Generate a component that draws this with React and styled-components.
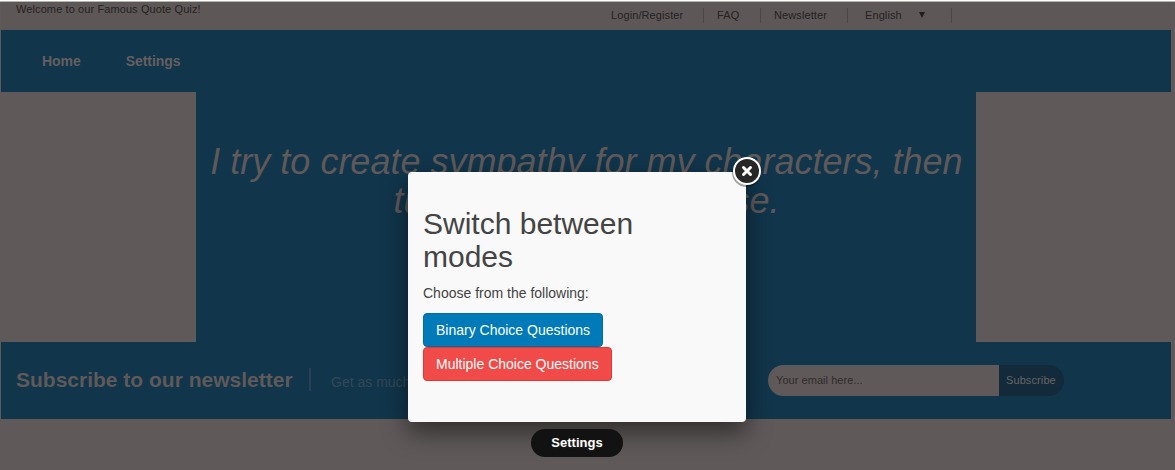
import React from 'react';
import styled, { createGlobalStyle } from 'styled-components';

const GlobalStyle = createGlobalStyle`
  * { box-sizing: border-box; }
  body {
    margin: 0;
    overflow: hidden;
    background: #5f5959;
    font-family: "Liberation Sans", Arial, sans-serif;
    font-size: 14px;
    line-height: 20px;
  }
  h1, h2, h3, p { margin: 0; }
`;

const Page = styled.div`
  position: relative;
  width: 1175px;
  height: 470px;
  padding: 2px 4px 0 1px;
  overflow: hidden;
  background: linear-gradient(#fdfdfd 0 1px, #b3b5ae 1px 2px, #5f5959 2px);
`;

const TopBar = styled.header`
  display: flex;
  height: 28px;
  padding-left: 15px;
  color: #262222;
  font-size: 11px;
  letter-spacing: 0.1px;
  background: #5d5757;
`;

const Welcome = styled.p`
  width: 582px;
  line-height: 15px;
`;

const TopLinks = styled.nav`
  display: flex;
  padding-top: 6px;
  height: 21px;
  line-height: 15px;
`;

const TopLink = styled.span`
  width: ${(p) => p.$width}px;
  padding-left: ${(p) => p.$indent}px;
  border-right: 1px solid #4c4747;
  white-space: nowrap;
`;

const Caret = styled.svg`
  width: 6px;
  height: 6px;
  margin-left: 17px;
  vertical-align: 1px;
  fill: #221e1e;
`;

const MainNav = styled.nav`
  display: flex;
  gap: 45px;
  height: 62px;
  padding-left: 41px;
  align-items: center;
  background: #11354b;
  color: #655f5f;
  font-weight: bold;
  letter-spacing: -0.05px;
`;

const Hero = styled.main`
  width: 780px;
  height: 250px;
  margin-left: 195px;
  padding: 50px 9px 0 10px;
  background: #11354b;
`;

const Quote = styled.h1`
  color: #5f5959;
  font-size: 36px;
  font-weight: normal;
  font-style: italic;
  line-height: 39px;
  text-align: center;
`;

const Newsletter = styled.section`
  display: flex;
  align-items: center;
  height: 77px;
  padding-left: 15px;
  background: #11354b;
`;

const NewsTitle = styled.h3`
  width: 295px;
  height: 23px;
  margin-top: -2px;
  border-right: 2px solid #2a4050;
  color: #5f5959;
  font-size: 21px;
  line-height: 23px;
  white-space: nowrap;
`;

const NewsText = styled.p`
  width: 457px;
  padding: 2px 0 0 20px;
  color: #344755;
`;

const Form = styled.div`
  display: flex;
  height: 31px;
  font-size: 11px;
  line-height: 31px;
`;

const EmailField = styled.div`
  width: 231px;
  padding-left: 8px;
  border-radius: 16px 0 0 16px;
  background: #5f5959;
  color: #312c2c;
  letter-spacing: 0.05px;
`;

const SubscribeButton = styled.div`
  width: 65px;
  padding-left: 7px;
  border-radius: 0 16px 16px 0;
  background: #122a39;
  color: #686567;
  letter-spacing: 0.1px;
`;

const Dialog = styled.section`
  position: absolute;
  left: 408px;
  top: 172px;
  width: 338px;
  height: 250px;
  padding: 35px 15px;
  border-radius: 4px;
  background: #f9f9f9;
  box-shadow: 0 10px 25px rgba(0, 0, 0, 0.5);
  color: #444;
`;

const DialogTitle = styled.h2`
  width: 260px;
  font-size: 30px;
  font-weight: normal;
  line-height: 33px;
`;

const DialogText = styled.p`
  margin: 10px 0;
`;

const Choices = styled.div`
  display: flex;
  flex-direction: column;
  align-items: flex-start;
`;

const Choice = styled.button`
  height: 34px;
  width: ${(p) => p.$width}px;
  padding: 0 0 0 12px;
  border: 1px solid ${(p) => p.$edge};
  border-radius: 4px;
  background: ${(p) => p.$fill};
  color: #fff;
  font: 14px/20px "Liberation Sans", Arial, sans-serif;
  text-align: left;
  white-space: nowrap;
`;

const CloseIcon = styled.svg`
  position: absolute;
  left: 322px;
  top: -18px;
  width: 36px;
  height: 36px;
`;

const Caption = styled.div`
  position: absolute;
  left: 531px;
  top: 429px;
  width: 92px;
  height: 28px;
  border-radius: 14px;
  background: #131212;
  color: #fff;
  font-size: 13px;
  font-weight: bold;
  line-height: 28px;
  text-align: center;
  text-shadow: 0 1px 2px #222;
`;

export default function App() {
  return (
    <Page>
      <GlobalStyle />
      <TopBar>
        <Welcome>Welcome to our Famous Quote Quiz!</Welcome>
        <TopLinks>
          <TopLink $width={106} $indent={13}>Login/Register</TopLink>
          <TopLink $width={57} $indent={13}>FAQ</TopLink>
          <TopLink $width={87} $indent={13}>Newsletter</TopLink>
          <TopLink $width={104} $indent={17}>
            English
            <Caret viewBox="0 0 6 6"><path d="M0 0h6L3 6z" /></Caret>
          </TopLink>
        </TopLinks>
      </TopBar>
      <MainNav>
        <span>Home</span>
        <span>Settings</span>
      </MainNav>
      <Hero>
        <Quote>
          I try to create sympathy for my characters, then turn the monsters loose.
        </Quote>
      </Hero>
      <Newsletter>
        <NewsTitle>Subscribe to our newsletter</NewsTitle>
        <NewsText>Get as much</NewsText>
        <Form>
          <EmailField>Your email here...</EmailField>
          <SubscribeButton>Subscribe</SubscribeButton>
        </Form>
      </Newsletter>
      <Dialog>
        <DialogTitle>Switch between modes</DialogTitle>
        <DialogText>Choose from the following:</DialogText>
        <Choices>
          <Choice $width={180} $fill="#007ab8" $edge="#006da4">Binary Choice Questions</Choice>
          <Choice $width={189} $fill="#f04b48" $edge="#ed3330">Multiple Choice Questions</Choice>
        </Choices>
        <CloseIcon viewBox="0 0 36 36">
          <circle cx="16.5" cy="18.5" r="14.5" fill="#000" opacity="0.35" />
          <circle cx="17" cy="17" r="13" fill="#272727" stroke="#fff" strokeWidth="2" />
          <path d="M13.5 13.5l7 7M20.5 13.5l-7 7" stroke="#fff" strokeWidth="3" strokeLinecap="round" />
        </CloseIcon>
      </Dialog>
      <Caption>Settings</Caption>
    </Page>
  );
}
